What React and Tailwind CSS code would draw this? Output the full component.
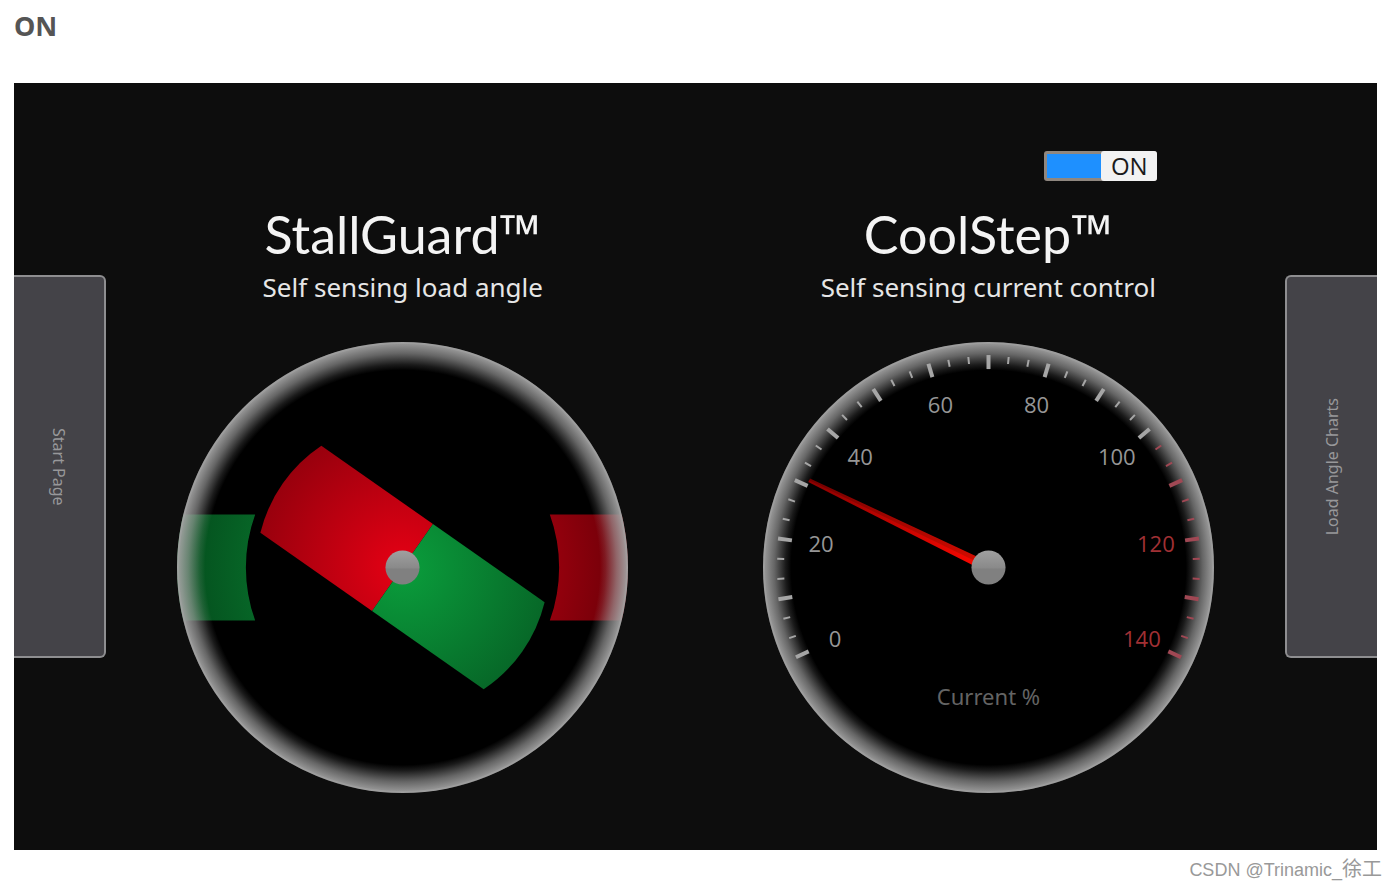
import React, { useState } from 'react';

const CENTER = 225;
const START_ANGLE = -115;
const SWEEP = 230;
const MAX_VALUE = 140;

const toAngle = (value) => START_ANGLE + (value / MAX_VALUE) * SWEEP;

const polar = (angle, radius) => {
  const rad = (angle * Math.PI) / 180;
  return { x: CENTER + radius * Math.sin(rad), y: CENTER - radius * Math.cos(rad) };
};

// 15 major ticks with two minor ticks between each pair
const ticks = Array.from({ length: 43 }, (_, i) => ({
  value: (i * 10) / 3,
  major: i % 3 === 0,
}));

const labels = [0, 20, 40, 60, 80, 100, 120, 140];

const Rim = ({ id }) => (
  <>
    <defs>
      <radialGradient id={`${id}-rim`} gradientUnits="userSpaceOnUse" cx={CENTER} cy={CENTER} r="225">
        <stop offset="0.875" stopColor="#a4a4a4" stopOpacity="0" />
        <stop offset="0.9" stopColor="#a4a4a4" stopOpacity="0.16" />
        <stop offset="0.95" stopColor="#a4a4a4" stopOpacity="0.62" />
        <stop offset="0.985" stopColor="#a4a4a4" stopOpacity="0.86" />
        <stop offset="1" stopColor="#a4a4a4" stopOpacity="0.94" />
      </radialGradient>
    </defs>
    <circle cx={CENTER} cy={CENTER} r="225" fill={`url(#${id}-rim)`} />
    <circle cx={CENTER} cy={CENTER} r="224" fill="none" stroke="#a8a8a8" strokeOpacity="0.4" strokeWidth="2" />
  </>
);

const Hub = ({ id }) => (
  <>
    <defs>
      <linearGradient id={`${id}-hub`} x1="0" y1="0" x2="0" y2="1">
        <stop offset="0" stopColor="#a0a0a0" />
        <stop offset="0.5" stopColor="#8a8a8a" />
        <stop offset="0.55" stopColor="#808080" />
        <stop offset="1" stopColor="#808080" />
      </linearGradient>
    </defs>
    <circle cx={CENTER} cy={CENTER} r="17" fill={`url(#${id}-hub)`} />
  </>
);

const MotorGauge = ({ angle }) => (
  <svg viewBox="0 0 450 450" className="w-full max-w-[451px]" role="img" aria-label="Load angle">
    <defs>
      <radialGradient id="motor-red" gradientUnits="userSpaceOnUse" cx={CENTER} cy={CENTER} r="225">
        <stop offset="0" stopColor="#e60014" />
        <stop offset="0.65" stopColor="#98000d" />
        <stop offset="1" stopColor="#6c0008" />
      </radialGradient>
      <radialGradient id="motor-green" gradientUnits="userSpaceOnUse" cx={CENTER} cy={CENTER} r="225">
        <stop offset="0" stopColor="#0a9e3c" />
        <stop offset="0.65" stopColor="#076828" />
        <stop offset="1" stopColor="#044c1c" />
      </radialGradient>
      <clipPath id="motor-face">
        <circle cx={CENTER} cy={CENTER} r="225" />
      </clipPath>
    </defs>
    <circle cx={CENTER} cy={CENTER} r="225" fill="#000" />
    <g clipPath="url(#motor-face)">
      <path d="M0 172 H78 A156 156 0 0 0 78 278 H0 Z" fill="url(#motor-green)" />
      <path d="M450 172 H372 A156 156 0 0 1 372 278 H450 Z" fill="url(#motor-red)" />
    </g>
    <g transform={`rotate(${angle} ${CENTER} ${CENTER})`}>
      <path d="M225 172 H89 A146 146 0 0 0 89 278 H225 Z" fill="url(#motor-red)" />
      <path d="M225 172 H361 A146 146 0 0 1 361 278 H225 Z" fill="url(#motor-green)" />
    </g>
    <Rim id="motor" />
    <Hub id="motor" />
  </svg>
);

const CurrentGauge = ({ value }) => (
  <svg viewBox="0 0 450 450" className="w-full max-w-[451px]" role="img" aria-label="Current in percent">
    <defs>
      <linearGradient id="needle-top" x1="0" y1="0" x2="0" y2="1">
        <stop offset="0" stopColor="#700000" />
        <stop offset="1" stopColor="#d80c00" />
      </linearGradient>
      <linearGradient id="needle-bottom" x1="0" y1="0" x2="0" y2="1">
        <stop offset="0" stopColor="#8c0000" />
        <stop offset="1" stopColor="#ff0800" />
      </linearGradient>
    </defs>
    <circle cx={CENTER} cy={CENTER} r="225" fill="#000" />
    <Rim id="current" />
    {ticks.map((tick) => {
      const angle = toAngle(tick.value);
      const from = polar(angle, tick.major ? 198 : 204);
      const to = polar(angle, tick.major ? 212 : 211);
      return (
        <line
          key={tick.value}
          x1={from.x}
          y1={from.y}
          x2={to.x}
          y2={to.y}
          stroke={tick.value > 101 ? '#a04854' : '#a6a6a6'}
          strokeWidth={tick.major ? 4 : 2}
        />
      );
    })}
    {labels.map((label) => {
      const { x, y } = polar(toAngle(label), 169);
      return (
        <text
          key={label}
          x={Math.round(x)}
          y={Math.round(y) + 8}
          textAnchor="middle"
          fill={label > 100 ? '#a03034' : '#969696'}
          className="font-['Open_Sans',sans-serif] text-[22px]"
        >
          {label}
        </text>
      );
    })}
    <text x="225" y="362" textAnchor="middle" fill="#646464" className="font-['Noto_Sans',sans-serif] text-[22px]">
      Current %
    </text>
    <g transform={`rotate(${toAngle(value)} ${CENTER} ${CENTER})`}>
      <path d="M224 26 H227 L230 225 H224 Z" fill="url(#needle-top)" />
      <path d="M225 26 H223 L220 225 H225 Z" fill="url(#needle-bottom)" />
    </g>
    <Hub id="current" />
  </svg>
);

const Switch = ({ checked, onChange }) => (
  <label
    className={`relative flex h-[30px] w-[113px] cursor-pointer rounded-[3px] bg-[#8f8780] ${
      checked ? '' : 'flex-row-reverse'
    }`}
  >
    <input
      type="checkbox"
      className="sr-only"
      aria-label="CoolStep"
      checked={checked}
      onChange={(e) => onChange(e.target.checked)}
    />
    <span className={`my-[3px] flex-1 ${checked ? 'ml-[3px] bg-[#1e90ff]' : 'mr-[3px] bg-[#444348]'}`} />
    <span className="w-14 rounded-[3px] bg-[#f2f2f2] text-center font-['Open_Sans',sans-serif] text-2xl leading-[30px] text-[#1a1a1a]">
      {checked ? 'ON' : 'OFF'}
    </span>
  </label>
);

const SideTab = ({ side, children }) => (
  <button
    type="button"
    className={`flex h-[383px] w-[92px] shrink-0 items-center justify-center border-2 border-[#8e8e90] bg-[#444348] font-['Noto_Sans',sans-serif] text-base text-[#98989a] ${
      side === 'left' ? 'rounded-r-md border-l-0' : 'rounded-l-md border-r-0'
    }`}
  >
    <span className={`[writing-mode:vertical-rl] ${side === 'right' ? 'rotate-180' : ''}`}>{children}</span>
  </button>
);

const GaugeColumn = ({ title, subtitle, control, children }) => (
  <section className="flex min-w-0 flex-1 flex-col items-center">
    <div className="flex h-[30px] w-[338px] justify-end">{control}</div>
    <h2 className="mt-5 flex items-baseline font-['Lato',sans-serif] text-[52px] leading-[66px] whitespace-nowrap text-[#f4f4f4]">
      {title}
      <span className="font-['Open_Sans',sans-serif] text-[54px] leading-none font-semibold">™</span>
    </h2>
    <p className="mb-[35px] font-['Noto_Sans',sans-serif] text-[26px] leading-10 whitespace-nowrap text-[#e6e6e6]">
      {subtitle}
    </p>
    {children}
  </section>
);

const App = () => {
  const [coolStep, setCoolStep] = useState(true);

  return (
    <div className="bg-white pl-[14px]">
      <h1 className="mb-[39px] pt-2 font-['Noto_Sans',sans-serif] text-[27px] leading-9 font-bold text-[#555]">ON</h1>

      <main className="mr-5 flex items-center bg-[#0d0d0d]">
        <SideTab side="left">Start Page</SideTab>
        <div className="flex min-w-0 flex-1 px-1 pt-[68px] pb-[57px]">
          <GaugeColumn title="StallGuard" subtitle="Self sensing load angle">
            <MotorGauge angle={35} />
          </GaugeColumn>
          <GaugeColumn
            title="CoolStep"
            subtitle="Self sensing current control"
            control={<Switch checked={coolStep} onChange={setCoolStep} />}
          >
            <CurrentGauge value={coolStep ? 31 : 100} />
          </GaugeColumn>
        </div>
        <SideTab side="right">Load Angle Charts</SideTab>
      </main>

      <footer className="pt-1 pr-[15px] text-right font-['Liberation_Sans','Noto_Sans_CJK_SC',sans-serif] text-[18px] leading-8 text-[#999]">
        CSDN @Trinamic_<span className="text-xl leading-none">徐工</span>
      </footer>
    </div>
  );
};

export default App;
